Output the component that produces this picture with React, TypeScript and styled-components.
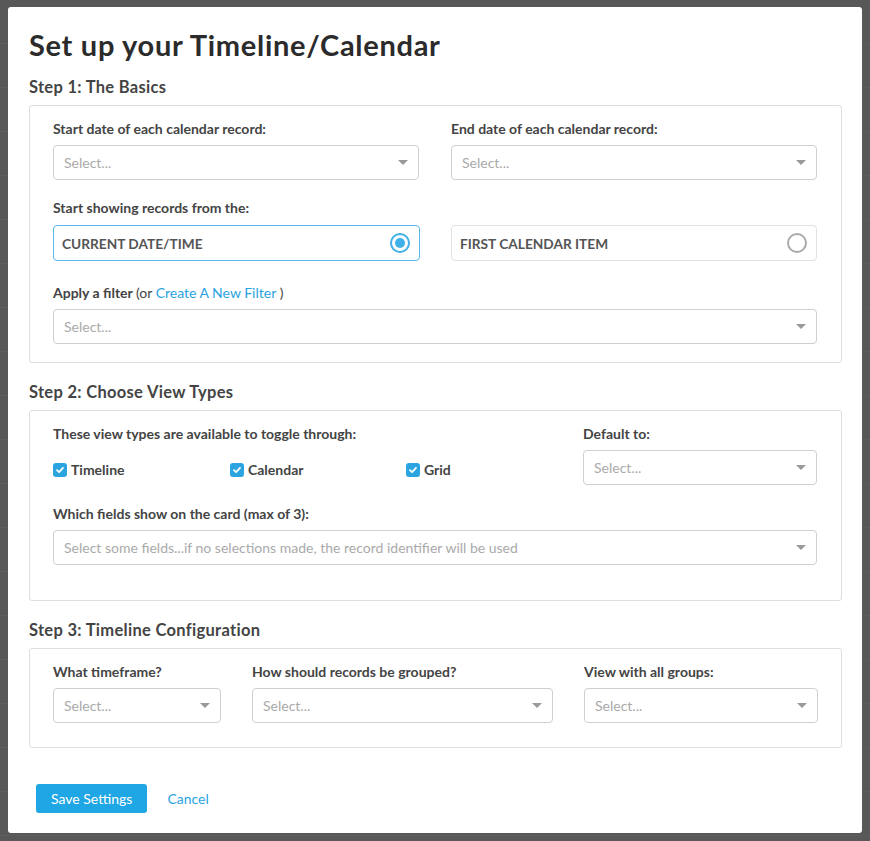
import styled, { createGlobalStyle } from "styled-components";

const GlobalStyle = createGlobalStyle`
  html, body {
    margin: 0;
    padding: 0;
    background: #585858;
  }
  body {
    font-family: "Lato", "Liberation Sans", sans-serif;
    color: #444;
  }
`;

const Backdrop = styled.div`
  min-height: 841px;
  padding: 7px 8px 8px 8px;
  box-sizing: border-box;
  background: repeating-linear-gradient(
    to bottom,
    #585858 0px,
    #585858 43px,
    #5e5e5e 43px,
    #5e5e5e 44px
  );
`;

const Modal = styled.div`
  background: #fff;
  border-radius: 3px;
  width: 854px;
  height: 826px;
  box-sizing: border-box;
  padding: 22px 20px 0 21px;
  display: flex;
  flex-direction: column;
`;

const Title = styled.h1`
  margin: 0 0 17px 0;
  font-size: 29px;
  letter-spacing: 0.7px;
  line-height: 32px;
  font-weight: 700;
  color: #2b2b2b;
`;

const StepTitle = styled.h2`
  margin: 0 0 9px 0;
  font-size: 16.5px;
  letter-spacing: 0.3px;
  line-height: 18px;
  font-weight: 700;
  color: #444;
`;

const Section = styled.div<{ $pb?: number }>`
  border: 1px solid #dedede;
  border-radius: 3px;
  padding: 15px 24px ${(p) => p.$pb ?? 17}px 23px;
  margin-bottom: 20px;
`;

const TwoCols = styled.div`
  display: grid;
  grid-template-columns: 366px 366px;
  column-gap: 32px;
`;

const Field = styled.div<{ $mb?: number }>`
  display: flex;
  flex-direction: column;
  margin-bottom: ${(p) => p.$mb ?? 0}px;
  min-width: 0;
`;

const Label = styled.label`
  font-size: 14px;
  font-weight: 700;
  line-height: 16px;
  color: #444;
  margin-bottom: 8px;
  white-space: nowrap;
`;

const Light = styled.span`
  font-weight: 400;
`;

const Link = styled.a`
  font-weight: 400;
  color: #29a3df;
  text-decoration: none;
`;

const SelectBox = styled.div`
  height: 35px;
  box-sizing: border-box;
  border: 1px solid #cfcfcf;
  border-radius: 4px;
  display: flex;
  align-items: center;
  justify-content: space-between;
  padding: 0 10px 0 10px;
  font-size: 14px;
  color: #aaa;
  background: #fff;
  white-space: nowrap;
`;

const Caret = styled.span`
  width: 0;
  height: 0;
  border-left: 5px solid transparent;
  border-right: 5px solid transparent;
  border-top: 5px solid #999;
`;

const RadioRow = styled.div`
  display: grid;
  grid-template-columns: 367px 366px;
  column-gap: 31px;
  margin-top: 1px;
`;

const RadioOption = styled.div<{ $active?: boolean }>`
  height: 36px;
  box-sizing: border-box;
  border: 1px solid ${(p) => (p.$active ? "#58b8ea" : "#e2e2e2")};
  border-radius: 4px;
  display: flex;
  align-items: center;
  justify-content: space-between;
  padding: 0 9px 0 8px;
  font-size: 13.7px;
  font-weight: 700;
  color: #555;
  text-transform: uppercase;
`;

const RadioCircle = styled.span<{ $active?: boolean }>`
  width: 20px;
  height: 20px;
  box-sizing: border-box;
  border-radius: 50%;
  border: 2px solid ${(p) => (p.$active ? "#3fb0e8" : "#aaa")};
  display: flex;
  align-items: center;
  justify-content: center;
  &::after {
    content: "";
    display: ${(p) => (p.$active ? "block" : "none")};
    width: 10px;
    height: 10px;
    border-radius: 50%;
    background: #3fb0e8;
  }
`;

const ViewGrid = styled.div`
  display: grid;
  grid-template-columns: 500px 234px;
  column-gap: 30px;
  margin-bottom: 21px;
`;

const Checks = styled.div`
  display: grid;
  grid-template-columns: 177px 176px 147px;
  margin-top: 12px;
`;

const CheckItem = styled.label`
  display: flex;
  align-items: center;
  gap: 4px;
  font-size: 14px;
  line-height: 16px;
  font-weight: 700;
  color: #444;
`;

const CheckBox = styled.span`
  width: 14px;
  height: 14px;
  border-radius: 3px;
  background: #2ba4e0;
  display: flex;
  align-items: center;
  justify-content: center;
`;

const ThreeCols = styled.div`
  display: grid;
  grid-template-columns: 168px 301px 234px;
  column-gap: 31px;
`;

const Footer = styled.div`
  display: flex;
  align-items: center;
  gap: 20px;
  padding: 16px 0 0 7px;
`;

const PrimaryButton = styled.button`
  height: 29px;
  padding: 0 15px;
  background: #1fa6e4;
  border: none;
  border-radius: 3px;
  color: #fff;
  font-family: inherit;
  font-size: 14px;
  cursor: pointer;
`;

const TextButton = styled.button`
  background: none;
  border: none;
  padding: 0;
  color: #29a3df;
  font-family: inherit;
  font-size: 14px;
  cursor: pointer;
`;

const Select = (props: { placeholder?: string }) => (
  <SelectBox>
    <span>{props.placeholder ?? "Select..."}</span>
    <Caret />
  </SelectBox>
);

const Check = (props: { label: string }) => (
  <CheckItem>
    <CheckBox>
      <svg width="10" height="10" viewBox="0 0 10 10">
        <path
          d="M2 5.2 L4.1 7.2 L8 2.8"
          stroke="#fff"
          strokeWidth="1.8"
          fill="none"
          strokeLinecap="round"
          strokeLinejoin="round"
        />
      </svg>
    </CheckBox>
    {props.label}
  </CheckItem>
);

const App = () => {
  return (
    <>
      <GlobalStyle />
      <Backdrop>
        <Modal>
          <Title>Set up your Timeline/Calendar</Title>

          <StepTitle>Step 1: The Basics</StepTitle>
          <Section $pb={18}>
            <TwoCols>
              <Field $mb={20}>
                <Label>Start date of each calendar record:</Label>
                <Select />
              </Field>
              <Field $mb={20}>
                <Label>End date of each calendar record:</Label>
                <Select />
              </Field>
            </TwoCols>
            <Field $mb={24}>
              <Label>Start showing records from the:</Label>
              <RadioRow>
                <RadioOption $active>
                  Current Date/Time
                  <RadioCircle $active />
                </RadioOption>
                <RadioOption>
                  First Calendar Item
                  <RadioCircle />
                </RadioOption>
              </RadioRow>
            </Field>
            <Field>
              <Label>
                Apply a filter <Light>(or</Light>{" "}
                <Link href="#">Create A New Filter</Link> <Light>)</Light>
              </Label>
              <Select />
            </Field>
          </Section>

          <StepTitle>Step 2: Choose View Types</StepTitle>
          <Section>
            <ViewGrid>
              <Field>
                <Label>These view types are available to toggle through:</Label>
                <Checks>
                  <Check label="Timeline" />
                  <Check label="Calendar" />
                  <Check label="Grid" />
                </Checks>
              </Field>
              <Field>
                <Label>Default to:</Label>
                <Select />
              </Field>
            </ViewGrid>
            <Field $mb={18}>
              <Label>Which fields show on the card (max of 3):</Label>
              <Select placeholder="Select some fields...if no selections made, the record identifier will be used" />
            </Field>
          </Section>

          <StepTitle>Step 3: Timeline Configuration</StepTitle>
          <Section $pb={24}>
            <ThreeCols>
              <Field>
                <Label>What timeframe?</Label>
                <Select />
              </Field>
              <Field>
                <Label>How should records be grouped?</Label>
                <Select />
              </Field>
              <Field>
                <Label>View with all groups:</Label>
                <Select />
              </Field>
            </ThreeCols>
          </Section>

          <Footer>
            <PrimaryButton>Save Settings</PrimaryButton>
            <TextButton>Cancel</TextButton>
          </Footer>
        </Modal>
      </Backdrop>
    </>
  );
};

export default App;
